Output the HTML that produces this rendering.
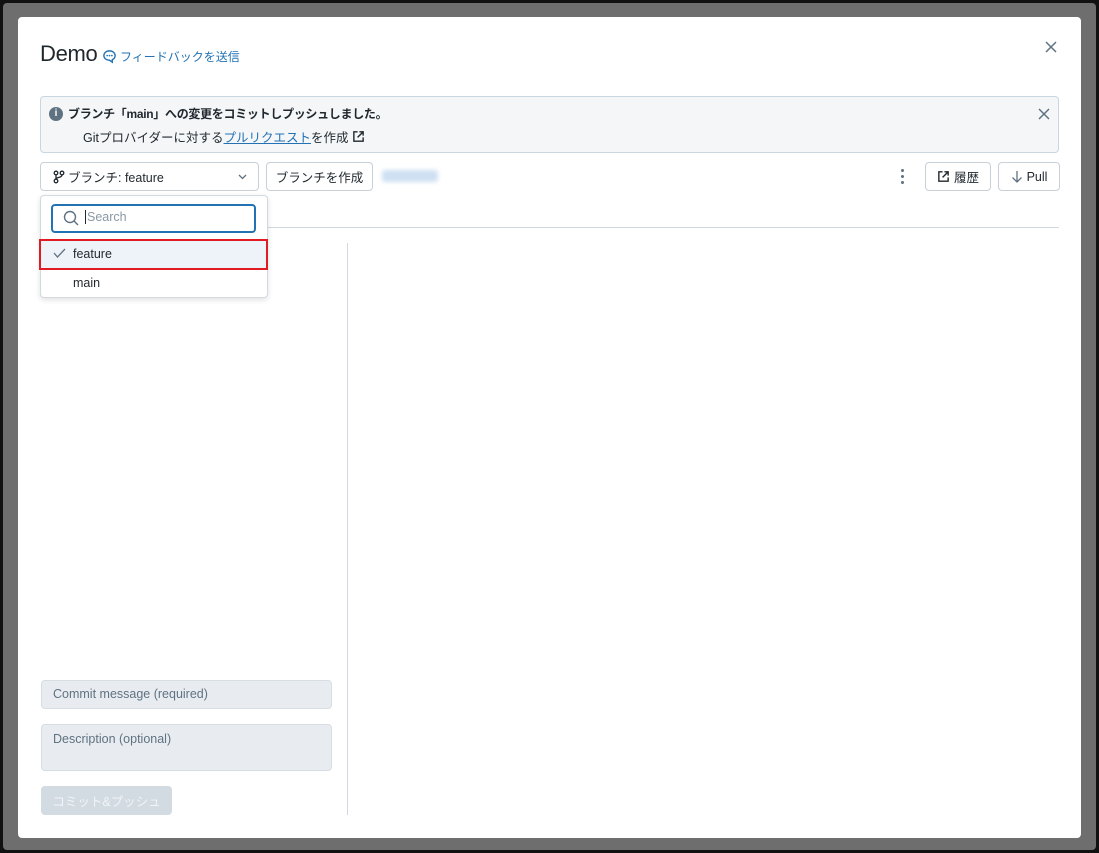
<!DOCTYPE html>
<html><head><meta charset="utf-8"><style>
*{box-sizing:border-box;margin:0;padding:0}
body{width:1099px;height:853px;background:#111;position:relative;overflow:hidden;font-family:"Liberation Sans","Noto Sans CJK JP",sans-serif;color:#1f272d}
.ov{position:absolute;left:3px;top:3px;width:1093px;height:847px;background:#6e6e6e;border-radius:4px}
.modal{position:absolute;left:18px;top:17px;width:1063px;height:821px;background:#fff;border-radius:4px}
.abs{position:absolute}
.btn{position:absolute;border:1px solid #c8d0d8;border-radius:4px;background:#fff;font-size:12.5px;display:flex;align-items:center;justify-content:center;color:#1f272d}
</style></head><body>
<div class="ov"></div>
<div class="modal">
 <div class="abs" style="left:22px;top:24px;font-size:22px;font-weight:500;letter-spacing:-0.3px">Demo</div>
 <div class="abs" style="left:84px;top:31px;font-size:12px;color:#2272b4;display:flex;align-items:center;gap:3px">
  <svg width="15" height="15" viewBox="0 0 16 16"><path d="M8 2C4.5 2 2 4.2 2 7s2.5 5 6 5l3 2v-2.6C13 10.4 14 8.8 14 7c0-2.8-2.5-5-6-5z" fill="none" stroke="#2272b4" stroke-width="1.5"/><circle cx="5.5" cy="7" r=".9" fill="#2272b4"/><circle cx="8" cy="7" r=".9" fill="#2272b4"/><circle cx="10.5" cy="7" r=".9" fill="#2272b4"/></svg>フィードバックを送信</div>
 <svg class="abs" style="left:1027px;top:24px" width="12" height="12" viewBox="0 0 12 12"><path d="M1 1l10 10M11 1L1 11" stroke="#5f7281" stroke-width="1.5"/></svg>
 <div class="abs" style="left:22px;top:79px;width:1019px;height:57px;background:#f4f6f8;border:1px solid #c9d6e0;border-radius:4px"></div>
 <div class="abs" style="left:31px;top:90px;width:14px;height:14px;border-radius:50%;background:#5f7281;color:#fff;font-size:10px;font-weight:bold;text-align:center;line-height:14px">i</div>
 <div class="abs" style="left:50px;top:88px;font-size:12px;font-weight:bold;letter-spacing:-0.3px">ブランチ「main」への変更をコミットしプッシュしました。</div>
 <div class="abs" style="left:65px;top:110px;font-size:12.5px">Gitプロバイダーに対する<span style="color:#2272b4;text-decoration:underline">プルリクエスト</span>を作成 <svg width="13" height="13" viewBox="0 0 14 14" style="vertical-align:-1px"><path d="M6 2H2v10h10V8M8 2h4v4M12 2L6 8" fill="none" stroke="#1f272d" stroke-width="1.5"/></svg></div>
 <svg class="abs" style="left:1020px;top:91px" width="12" height="12" viewBox="0 0 12 12"><path d="M1 1l10 10M11 1L1 11" stroke="#5f7281" stroke-width="1.5"/></svg>
 <div class="btn" style="left:22px;top:145px;width:219px;height:29px;justify-content:flex-start;padding-left:12px">
  <svg width="12" height="14" viewBox="0 0 12 14"><circle cx="3" cy="3" r="1.8" fill="none" stroke="#1f272d" stroke-width="1.3"/><circle cx="3" cy="11" r="1.8" fill="none" stroke="#1f272d" stroke-width="1.3"/><circle cx="9" cy="3" r="1.8" fill="none" stroke="#1f272d" stroke-width="1.3"/><path d="M3 5v4M9 5c0 3-6 2-6 4" fill="none" stroke="#1f272d" stroke-width="1.3"/></svg>
  <span style="margin-left:3px">ブランチ: feature</span>
  <svg style="position:absolute;right:11px;top:11px" width="9" height="6" viewBox="0 0 9 6"><path d="M1 1l3.5 3.5L8 1" fill="none" stroke="#5f7281" stroke-width="1.3"/></svg>
 </div>
 <div class="btn" style="left:248px;top:145px;width:107px;height:29px">ブランチを作成</div>
 <div class="abs" style="left:364px;top:153px;width:56px;height:12px;background:#cfe0f3;filter:blur(2px);border-radius:3px"></div>
 <div class="abs" style="left:883px;top:152px;width:3px;height:15px;display:flex;flex-direction:column;justify-content:space-between"><i style="width:3px;height:3px;border-radius:50%;background:#5f7281"></i><i style="width:3px;height:3px;border-radius:50%;background:#5f7281"></i><i style="width:3px;height:3px;border-radius:50%;background:#5f7281"></i></div>
 <div class="btn" style="left:907px;top:145px;width:66px;height:29px;gap:4px"><svg width="13" height="13" viewBox="0 0 14 14"><path d="M6 2H2v10h10V8M8 2h4v4M12 2L6 8" fill="none" stroke="#1f272d" stroke-width="1.5"/></svg>履歴</div>
 <div class="btn" style="left:980px;top:145px;width:62px;height:29px;gap:4px"><svg width="12" height="13" viewBox="0 0 12 13"><path d="M6 1v11M1.5 7.5L6 12l4.5-4.5" fill="none" stroke="#5f7281" stroke-width="1.3"/></svg>Pull</div>
 <div class="abs" style="left:250px;top:210px;width:791px;height:1px;background:#d1d9e1"></div>
 <div class="abs" style="left:329px;top:226px;width:1px;height:572px;background:#d1d9e1"></div>
 <div class="abs" style="left:22px;top:178px;width:228px;height:103px;background:#fff;border:1px solid #d1d9e1;border-radius:4px;box-shadow:0 2px 6px rgba(0,0,0,.12)"></div>
 <div class="abs" style="left:33px;top:187px;width:205px;height:29px;border:2px solid #2272b4;border-radius:4px"></div>
 <svg class="abs" style="left:45px;top:193px" width="16" height="16" viewBox="0 0 16 16"><circle cx="7" cy="7" r="5.5" fill="none" stroke="#5f7281" stroke-width="1.4"/><path d="M11 11l4 4" stroke="#5f7281" stroke-width="1.4"/></svg>
 <div class="abs" style="left:67px;top:193px;font-size:12.5px;color:#8a99a6"><span style="border-left:1px solid #1f272d;margin-right:1px"></span>Search</div>
 <div class="abs" style="left:21px;top:222px;width:229px;height:31px;background:#eef3f9;border:2px solid #e01b24"></div>
 <svg class="abs" style="left:35px;top:231px" width="13" height="10" viewBox="0 0 13 10"><path d="M1 5l3.5 4L12 1" fill="none" stroke="#5f7281" stroke-width="1.3"/></svg>
 <div class="abs" style="left:55px;top:230px;font-size:12.5px">feature</div>
 <div class="abs" style="left:55px;top:259px;font-size:12.5px">main</div>
 <div class="abs" style="left:23px;top:663px;width:291px;height:29px;background:#e8ecf0;border:1px solid #d6dde3;border-radius:4px;font-size:12.5px;color:#5f7281;padding:6px 11px">Commit message (required)</div>
 <div class="abs" style="left:23px;top:707px;width:291px;height:47px;background:#e8ecf0;border:1px solid #d6dde3;border-radius:4px;font-size:12.5px;color:#5f7281;padding:7px 11px">Description (optional)</div>
 <div class="abs" style="left:23px;top:769px;width:131px;height:29px;background:#d2dae2;border-radius:4px;font-size:12.5px;color:#f2f5f7;display:flex;align-items:center;justify-content:center">コミット&amp;プッシュ</div>
</div>
</body></html>
